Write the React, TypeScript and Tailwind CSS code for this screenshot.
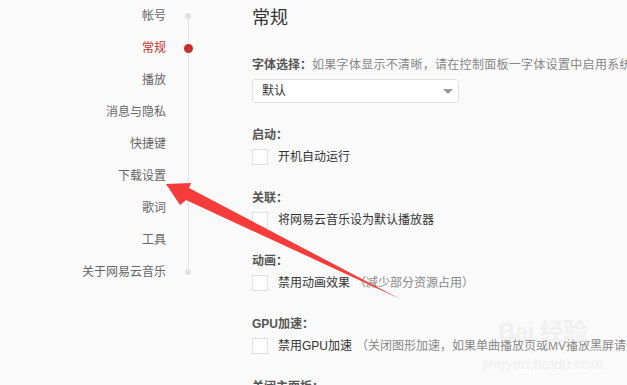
const navItems = [
  "帐号",
  "常规",
  "播放",
  "消息与隐私",
  "快捷键",
  "下载设置",
  "歌词",
  "工具",
  "关于网易云音乐",
];

function Checkbox({ text, note }: { text: string; note?: string }) {
  return (
    <div className="flex items-center h-5 mt-[2px]">
      <span className="w-4 h-4 border border-[#e1e1e1] bg-white shrink-0" />
      <span className="ml-[10px] text-[#333]">{text}</span>
      {note && <span className="ml-1 text-[#888]">{note}</span>}
    </div>
  );
}

function Section({ label, text, note }: { label: string; text: string; note?: string }) {
  return (
    <div className="flex flex-col">
      <div className="h-5 leading-5 font-bold text-[#555]">{label}</div>
      <Checkbox text={text} note={note} />
    </div>
  );
}

export default function App() {
  return (
    <div
      className="relative w-[627px] h-[385px] overflow-hidden bg-[#fafafa] text-[12px] whitespace-nowrap"
      style={{ fontFamily: '"Liberation Sans", "Noto Sans CJK SC", sans-serif' }}
    >
      <div className="flex">
        {/* left nav */}
        <div className="relative w-[252px] shrink-0">
          <div className="absolute left-[188px] top-[17px] h-[255px] border-l border-dotted border-[#d8d8d8]" />
          {navItems.map((item, i) => (
            <div key={item} className="flex items-center h-8">
              <div
                className={
                  "w-[166px] text-right " + (i === 1 ? "text-[#c62f2f]" : "text-[#666]")
                }
              >
                {item}
              </div>
              <div className="w-[44px] flex justify-center relative">
                {i === 1 ? (
                  <span className="w-[9px] h-[9px] rounded-full bg-[#c62f2f]" />
                ) : i === 0 || i === navItems.length - 1 ? (
                  <span className="w-[6px] h-[6px] rounded-full bg-[#e2e2e2]" />
                ) : null}
              </div>
            </div>
          ))}
        </div>

        {/* content */}
        <div className="flex flex-col pt-[6px]">
          <div className="h-6 leading-6 text-[18px] text-[#333]">常规</div>

          <div className="mt-[25px] h-5 leading-5">
            <span className="font-bold text-[#555]">字体选择：</span>
            <span className="text-[#888] tracking-[0.3px]">如果字体显示不清晰，请在控制面板一字体设置中启用系统字体</span>
          </div>
          <div className="mt-1 w-[207px] h-6 flex items-center justify-between bg-white border border-[#e1e1e1] rounded-[3px] pl-[9px] pr-[5px]">
            <span className="text-[#333]">默认</span>
            <span className="w-0 h-0 border-l-[5px] border-r-[5px] border-t-[5px] border-l-transparent border-r-transparent border-t-[#999]" />
          </div>

          <div className="mt-[22px] flex flex-col gap-[21px]">
            <Section label="启动：" text="开机自动运行" />
            <Section label="关联：" text="将网易云音乐设为默认播放器" />
            <Section label="动画：" text="禁用动画效果" note="（减少部分资源占用）" />
            <Section
              label="GPU加速："
              text="禁用GPU加速"
              note="（关闭图形加速，如果单曲播放页或MV播放黑屏请勾选此项）"
            />
            <div className="h-5 leading-5 font-bold text-[#555]">关闭主面板：</div>
          </div>
        </div>
      </div>

      {/* watermark */}
      <div className="absolute left-[482px] top-[318px] flex flex-col items-center text-[#f0f0f0] pointer-events-none">
        <div className="text-[24px] font-bold leading-7 tracking-tight">Bai 经验</div>
        <div className="mt-[8px] text-[15px] leading-5">jingyan.baidu.com</div>
      </div>

      {/* red arrow annotation */}
      <svg className="absolute left-0 top-0 pointer-events-none" width="627" height="385">
        <polygon
          points="166,184 191,183 189,188 400,299 186,200 180,205"
          fill="#f63b3b"
        />
      </svg>
    </div>
  );
}
